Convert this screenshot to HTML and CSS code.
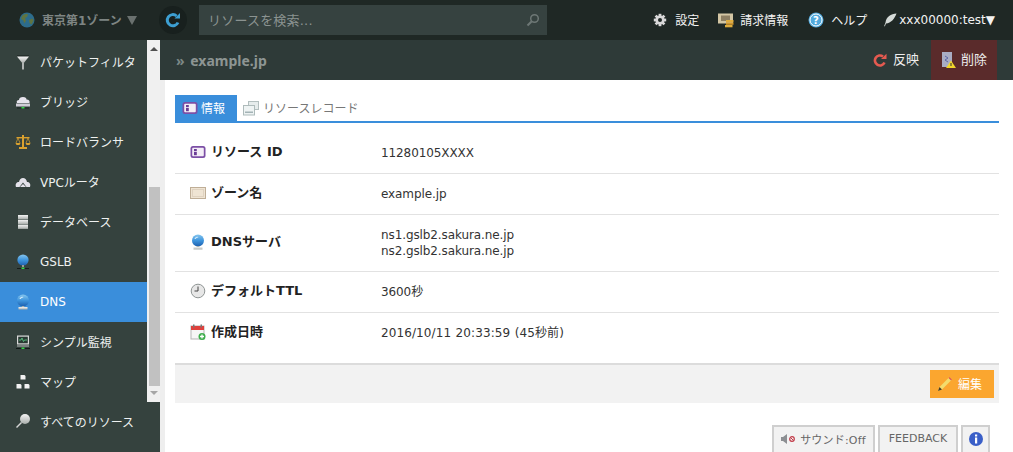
FILE: index.html
```html
<!DOCTYPE html>
<html lang="ja">
<head>
<meta charset="utf-8">
<title>example.jp</title>
<link rel="stylesheet" href="styles.css">
</head>
<body>
<svg class="defs" width="0" height="0">
  <defs>
    <linearGradient id="gGlobe" x1="0" y1="0" x2="0" y2="1"><stop offset="0" stop-color="#86c6ee"/><stop offset=".5" stop-color="#3f95dd"/><stop offset="1" stop-color="#1c5fae"/></linearGradient>
    <linearGradient id="gSteel" x1="0" y1="0" x2="0" y2="1"><stop offset="0" stop-color="#f4f4f4"/><stop offset="1" stop-color="#a9aeab"/></linearGradient>
    <symbol id="info" viewBox="0 0 16 16"><rect x=".5" y="2" width="15" height="12" rx="2.500" fill="#7c4fa6"/><rect x="2.200" y="3.700" width="11.600" height="8.600" rx="1" fill="#f4eef7"/><rect x="4" y="5" width="2.800" height="2" fill="#6b3d96"/><rect x="4" y="7.800" width="2.800" height="3.400" fill="#6b3d96"/></symbol>
    <symbol id="server" viewBox="0 0 16 16"><circle cx="8" cy="6.500" r="6" fill="url(#gGlobe)"/><path d="M4.500 4.500c1-1.600 2.600-2 4-1.600-.5 1-2 .7-2.500 1.600-.4.8-1 .6-1.500 0z" fill="#d5ecfa"/><rect x="6.700" y="12" width="2.600" height="1.400" fill="#aab0ae"/><rect x="3.500" y="13" width="9" height="2.500" fill="url(#gSteel)"/></symbol>
  </defs>
</svg>
<header class="topbar">
  <div class="zone">
    <svg class="ico16" viewBox="0 0 16 16"><circle cx="8" cy="8" r="7.500" fill="#2d6c8c"/><path d="M3 4c2-2 5-2.500 6-1.500L8 5 6 6l1 2.500-1.500 3L4 8 2 7zM10 8l3.500-1.500 1 2-2 4-2-1.500z" fill="#5f7442"/></svg>
    <span class="zone-name lift">東京第1ゾーン</span>
    <span class="zone-arrow"></span>
  </div>
  <div class="reload">
    <svg width="18" height="18" viewBox="0 0 18 18"><path d="M14 11.500A5.600 5.600 0 1 1 12.600 5" fill="none" stroke="#3d9fd2" stroke-width="3"/><path d="M10.500 7.500h5.500V2z" fill="#3d9fd2"/></svg>
  </div>
  <div class="search">
    <span class="search-text lift">リソースを検索...</span>
    <svg width="14" height="14" viewBox="0 0 14 14"><circle cx="8.500" cy="5.500" r="3.800" fill="none" stroke="#6d7775" stroke-width="1.500"/><path d="M5.800 8.200L1.500 12.500" stroke="#6d7775" stroke-width="2"/></svg>
  </div>
  <nav class="topnav">
    <a class="topnav-item gap-set">
      <svg class="ico14" viewBox="0 0 14 14"><g fill="#d8d8d8"><circle cx="7" cy="7" r="4.600"/><rect x="5.600" y=".8" width="2.800" height="12.400"/><rect x="5.600" y=".8" width="2.800" height="12.400" transform="rotate(45 7 7)"/><rect x="5.600" y=".8" width="2.800" height="12.400" transform="rotate(90 7 7)"/><rect x="5.600" y=".8" width="2.800" height="12.400" transform="rotate(135 7 7)"/></g><circle cx="7" cy="7" r="2" fill="#1f2825"/></svg>
      <span class="lift">設定</span>
    </a>
    <a class="topnav-item gap-bill">
      <svg class="ico16" viewBox="0 0 16 16"><rect x="0" y="1.500" width="15" height="10" fill="#d3c6a4"/><rect x="3" y="3.500" width="9" height="5.500" fill="#8d7f63"/><rect x="8" y="8" width="7.500" height="2.300" fill="#e0ad3d"/><rect x="8" y="10.500" width="7.500" height="2.300" fill="#cf962c"/><rect x="7" y="13" width="7.500" height="2.300" fill="#e0ad3d"/></svg>
      <span class="lift">請求情報</span>
    </a>
    <a class="topnav-item gap-help">
      <svg class="ico16" viewBox="0 0 16 16"><circle cx="8" cy="8" r="7.500" fill="#52a9dc"/><circle cx="8" cy="8" r="6" fill="none" stroke="#fff" stroke-width="1"/><text class="help-mark" x="8" y="12" text-anchor="middle">?</text></svg>
      <span class="lift">ヘルプ</span>
    </a>
    <a class="topnav-item gap-user">
      <svg class="ico14" viewBox="0 0 14 14"><path d="M13.500.500C8 1 3 3.500 2.500 9.500L1 13.500l1-.5 1-2.500c5-.5 8.500-4.500 10.500-10z" fill="#d5dbd8"/></svg>
      <span class="user">xxx00000:test▼</span>
    </a>
  </nav>
</header>
<div class="body">
  <aside class="sidebar">
    <div class="side-scroll">
      <ul class="side-list">
        <li class="side-item">
          <svg class="ico16" viewBox="0 0 16 16"><rect x="2" y="1.500" width="12" height="1" fill="#161c1b"/><path d="M2 2.500h12L8.800 9H7.200z" fill="url(#gSteel)"/><rect x="7.300" y="9" width="1.400" height="6.500" fill="#e6e6e6"/></svg>
          <span class="lift">パケットフィルタ</span>
        </li>
        <li class="side-item">
          <svg class="ico16" viewBox="0 0 16 16"><path d="M2 9c-1-2 .5-3 2-3 0-2 1.500-3 4-3s3.500 1 3.500 2.500C14 5.500 15 7 14.500 9z" fill="#e6e3ec"/><rect x="1" y="9.500" width="14" height="3" fill="#cfccd6"/><rect x="2" y="13.500" width="12" height="1" fill="#1a2220"/><rect x="6.500" y="13" width="3" height="1.500" fill="#38d64a"/></svg>
          <span class="lift">ブリッジ</span>
        </li>
        <li class="side-item">
          <svg class="ico16" viewBox="0 0 16 16"><g fill="#d9a12f"><rect x="7" y="1" width="2" height="12"/><rect x="1.500" y="3" width="13" height="1.400"/><rect x="4" y="13" width="8" height="2"/><path d="M.500 9h5L4.500 11h-3zM10.500 9h5L14.500 11h-3z"/></g><path d="M3 4L1 9M3 4l2 5M13 4l-2 5M13 4l2 5" stroke="#d9a12f" stroke-width=".7" fill="none"/></svg>
          <span class="lift">ロードバランサ</span>
        </li>
        <li class="side-item">
          <svg class="ico16" viewBox="0 0 16 16"><path d="M1 13c-1-3 .5-5 3-5 .5-2.500 2-4 4-4s3.500 1.500 4 4c2.500 0 4 2 3 5h-3.500L8 8.500 4.500 13z" fill="#e4e2ea"/><path d="M8 10l3 3H5z" fill="#e4e2ea"/></svg>
          <span class="lift">VPCルータ</span>
        </li>
        <li class="side-item">
          <svg class="ico16" viewBox="0 0 16 16"><rect x="3" y="1" width="10" height="4.300" fill="url(#gSteel)"/><rect x="3" y="5.800" width="10" height="4.300" fill="url(#gSteel)"/><rect x="3" y="10.600" width="10" height="4.300" fill="url(#gSteel)"/></svg>
          <span class="lift">データベース</span>
        </li>
        <li class="side-item">
          <svg class="ico16" viewBox="0 0 16 16"><circle cx="8" cy="6" r="5.600" fill="url(#gGlobe)"/><rect x="7" y="11" width="2" height="2" fill="#999"/><rect x="2" y="14" width="12" height="1" fill="#161c1b"/><rect x="6.500" y="13.500" width="3" height="1.500" fill="#38d64a"/></svg>
          <span>GSLB</span>
        </li>
        <li class="side-item is-active">
          <svg class="ico16"><use href="#server"/></svg>
          <span>DNS</span>
        </li>
        <li class="side-item">
          <svg class="ico16" viewBox="0 0 16 16"><rect x="2" y="1.500" width="12" height="9" fill="#d9d9d9"/><rect x="3.200" y="2.700" width="9.600" height="6.600" fill="#2a3a34"/><path d="M4 6h2l1-2 1.500 3.500L9.500 6H12" stroke="#5fd28a" stroke-width=".8" fill="none"/><rect x="2" y="11.500" width="12" height="1" fill="#bbb"/><rect x="1" y="14" width="14" height="1" fill="#141a19"/><rect x="6.500" y="13.500" width="3" height="1.500" fill="#38d64a"/></svg>
          <span class="lift">シンプル監視</span>
        </li>
        <li class="side-item">
          <svg class="ico16" viewBox="0 0 16 16"><g fill="#f2f2f2"><path d="M5.500 1h4l1 1v3.500h-5z"/><path d="M1.500 10h4l1 1v3.500h-5z"/><path d="M9.500 10h4l1 1v3.500h-5z"/></g></svg>
          <span class="lift">マップ</span>
        </li>
      </ul>
      <div class="side-bar">
        <span class="arrow-up"></span>
        <span class="thumb"></span>
        <span class="arrow-down"></span>
      </div>
    </div>
    <div class="side-item side-all">
      <svg class="ico16" viewBox="0 0 16 16"><circle cx="10" cy="6" r="5" fill="url(#gSteel)"/><path d="M6.500 9.500L1.500 14.500" stroke="#d5d5d5" stroke-width="1.500"/></svg>
      <span>すべてのリソース</span>
    </div>
  </aside>
  <main class="main">
    <div class="titlebar">
      <h1 class="title"><span class="title-mark">»</span> example.jp</h1>
      <div class="actions">
        <a class="action">
          <svg width="14" height="14" viewBox="0 0 14 14"><path d="M11.500 9.500A5 5 0 1 1 10 3.500" fill="none" stroke="#e55a50" stroke-width="2.600"/><path d="M8 6h5.500V.800z" fill="#e55a50"/></svg>
          <span class="lift2">反映</span>
        </a>
        <a class="action action-delete">
          <svg width="16" height="18" viewBox="0 0 16 18"><rect x="1" y="1" width="10" height="15" fill="#a9adc4"/><path d="M4 5l3 2-3 2 3 2" stroke="#5a66a8" fill="none"/><path d="M10 9.500l5 7.500H5z" fill="#f0d52c"/><rect x="9.500" y="12" width="1" height="3" fill="#333"/></svg>
          <span class="lift2">削除</span>
        </a>
      </div>
    </div>
    <div class="content">
      <div class="tabs">
        <a class="tab tab-on"><svg class="ico16"><use href="#info"/></svg><span class="lift">情報</span></a>
        <a class="tab tab-off">
          <svg class="ico16" viewBox="0 0 16 16"><rect x="5.500" y="1.500" width="10" height="8" fill="#e6ecec" stroke="#b3bfbf"/><rect x=".5" y="5.500" width="11" height="9.500" fill="#eef3f3" stroke="#aebbbb"/><rect x="2" y="11.500" width="8" height="1.500" fill="#a3b3b6"/></svg>
          <span class="lift">リソースレコード</span>
        </a>
      </div>
      <dl class="details">
        <div class="row">
          <dt><svg class="ico16"><use href="#info"/></svg><span class="lift2">リソース ID</span></dt>
          <dd>11280105XXXX</dd>
        </div>
        <div class="row">
          <dt><svg class="ico16" viewBox="0 0 16 16"><rect x=".5" y="2.500" width="15" height="11" fill="#efe4d3" stroke="#bfae97"/><rect x="2.500" y="4.500" width="11" height="7" fill="none" stroke="#cfc1ac" stroke-dasharray="1 1"/></svg><span class="lift2">ゾーン名</span></dt>
          <dd>example.jp</dd>
        </div>
        <div class="row">
          <dt><svg class="ico16"><use href="#server"/></svg><span class="lift2">DNSサーバ</span></dt>
          <dd>ns1.gslb2.sakura.ne.jp<br>ns2.gslb2.sakura.ne.jp</dd>
        </div>
        <div class="row">
          <dt><svg class="ico16" viewBox="0 0 16 16"><circle cx="8" cy="8" r="6.800" fill="#e7e7e7" stroke="#8f9594"/><path d="M8 3.500V8H4.500" fill="none" stroke="#444" stroke-width="1"/></svg><span class="lift2">デフォルトTTL</span></dt>
          <dd>3600秒</dd>
        </div>
        <div class="row">
          <dt><svg class="ico16" viewBox="0 0 16 16"><rect x="1" y="2" width="13" height="13" fill="#f6f6f6" stroke="#b5b5b5"/><rect x="1" y="2" width="13" height="4" fill="#e0403c"/><rect x="3" y=".5" width="1.500" height="3" fill="#777"/><rect x="10.500" y=".5" width="1.500" height="3" fill="#777"/><circle cx="12" cy="12.500" r="3.500" fill="#3eae4c"/><path d="M12 10.500v4M10 12.500h4" stroke="#fff" stroke-width="1.300"/></svg><span class="lift2">作成日時</span></dt>
          <dd class="date">2016/10/11 20:33:59 (45秒前)</dd>
        </div>
      </dl>
      <div class="footer-bar">
        <a class="edit">
          <svg class="ico16" viewBox="0 0 16 16"><path d="M1 15l1.500-4L12.500 1l2.500 2.500L5 13.500z" fill="#f3dc6d"/><path d="M12.500 1L15 3.500l-1 1L11.500 2z" fill="#e0564f"/><path d="M1 15l1.500-4L5 13.500z" fill="#4b3d26"/></svg>
          <span class="lift">編集</span>
        </a>
      </div>
      <div class="util">
        <a class="util-btn util-sound">
          <svg width="14" height="12" viewBox="0 0 14 12"><path d="M0 4h2l4-3v10L2 8H0z" fill="#8c8f93"/><circle cx="11" cy="6" r="2.300" fill="none" stroke="#c23a48" stroke-width="1.200"/><path d="M9.500 4.500l3 3" stroke="#c23a48"/></svg>
          <span>サウンド:Off</span>
        </a>
        <a class="util-btn util-feedback">FEEDBACK</a>
        <a class="util-btn util-info">
          <svg class="ico16" viewBox="0 0 16 16"><circle cx="8" cy="8" r="7" fill="#3a5fc8"/><rect x="7" y="3.500" width="2.200" height="2" fill="#fff"/><rect x="7" y="6.500" width="2.200" height="6" fill="#fff"/></svg>
        </a>
      </div>
    </div>
  </main>
</div>
</body>
</html>
```

FILE: styles.css
```css
* { box-sizing: border-box; }
html, body { margin: 0; height: 100%; overflow: hidden; }
body {
  font-family: "DejaVu Sans", "Noto Sans CJK JP", sans-serif;
  font-size: 12px;
  color: #333;
  background: #fff;
}
.defs { position: absolute; }
a { color: inherit; text-decoration: none; }
svg { display: block; flex: none; }
.ico16 { width: 16px; height: 16px; }
.ico14 { width: 14px; height: 14px; }
.lift { padding-bottom: 2px; }
.lift2 { padding-bottom: 4px; }

.topbar {
  height: 40px;
  display: flex;
  align-items: center;
  background: #1f2825;
}
.zone {
  width: 159px;
  padding-left: 19px;
  display: flex;
  align-items: center;
  gap: 7px;
  color: #7e8583;
  font-weight: 700;
}
.zone-arrow {
  margin-left: -2px;
  border-left: 5px solid transparent;
  border-right: 5px solid transparent;
  border-top: 9px solid #6a716f;
}
.reload {
  width: 28px;
  height: 28px;
  border-radius: 50%;
  background: #18201e;
  display: flex;
  align-items: center;
  justify-content: center;
}
.search {
  margin-left: 12px;
  width: 348px;
  height: 30px;
  padding: 0 7px 0 9px;
  background: #364240;
  display: flex;
  align-items: center;
  justify-content: space-between;
  color: #8b9391;
  font-size: 13px;
  letter-spacing: .2px;
}
.topnav {
  margin-left: auto;
  padding-right: 18px;
  display: flex;
  align-items: center;
  color: #f2f2f2;
}
.topnav-item { display: flex; align-items: center; }
.gap-set { gap: 8px; }
.gap-bill { gap: 6px; margin-left: 19px; }
.gap-help { gap: 7px; margin-left: 20px; }
.gap-user { gap: 2px; margin-left: 16px; }
.help-mark { font-size: 10px; font-weight: 700; fill: #fff; }

.body { display: flex; height: 412px; }
.sidebar {
  width: 160px;
  flex: none;
  display: flex;
  flex-direction: column;
  background: #35423e;
}
.side-scroll { height: 362px; display: flex; overflow: hidden; }
.side-list {
  list-style: none;
  margin: 0;
  padding: 2px 0 0;
  width: 147px;
  flex: none;
}
.side-item {
  height: 40px;
  display: flex;
  align-items: center;
  gap: 9px;
  padding-left: 15px;
  color: #eef1f0;
}
.is-active { background: #3a8edb; color: #fff; }
.side-all { margin-top: 0; height: 50px; padding-bottom: 12px; }
.side-bar {
  width: 13px;
  flex: none;
  background: #f0f0f0;
  display: flex;
  flex-direction: column;
  align-items: center;
}
.arrow-up {
  margin-top: 7px;
  border-left: 4px solid transparent;
  border-right: 4px solid transparent;
  border-bottom: 4px solid #505050;
}
.thumb {
  width: 11px;
  height: 199px;
  margin: 136px 0 0 2px;
  background: #c1c1c1;
}
.arrow-down {
  margin-top: 5px;
  border-left: 4px solid transparent;
  border-right: 4px solid transparent;
  border-top: 4px solid #a6a6a6;
}

.main { flex: 1; min-width: 0; display: flex; flex-direction: column; }
.titlebar {
  height: 40px;
  flex: none;
  display: flex;
  align-items: center;
  justify-content: space-between;
  padding: 0 16px 0 16px;
  background: #2e3a38;
}
.title {
  margin: 0;
  font-family: "Noto Sans", "DejaVu Sans", sans-serif;
  font-size: 14px;
  font-weight: 700;
  word-spacing: 2px;
  color: #8d9593;
}
.title-mark { color: #7c8886; }
.actions { display: flex; align-items: stretch; height: 40px; gap: 12px; }
.action {
  display: flex;
  align-items: center;
  gap: 6px;
  color: #eee;
  font-size: 13px;
}
.action-delete {
  width: 66px;
  padding-left: 10px;
  gap: 4px;
  background: #5a2b2b;
}
.content {
  flex: 1;
  margin-left: 5px;
  padding: 15px 14px 0 10px;
  background: #fff;
  box-shadow: -5px 0 0 #eeeeee;
}
.tabs {
  height: 28px;
  display: flex;
  border-bottom: 2px solid #3a8edb;
}
.tab { display: flex; align-items: center; height: 26px; }
.tab-on {
  width: 62px;
  padding-left: 7px;
  gap: 3px;
  background: #3a8edb;
  color: #fff;
}
.tab-off { margin-left: 6px; gap: 4px; color: #777; }
.details { margin: 10px 0 0; }
.row {
  display: flex;
  align-items: center;
  min-height: 41px;
  padding: 0 0 0 15px;
  border-bottom: 1px solid #e2e2e2;
}
.row:nth-child(3) { min-height: 57px; }
.row:last-child { border-bottom: 0; min-height: 50px; padding-bottom: 10px; }
.row dt {
  width: 191px;
  flex: none;
  display: flex;
  align-items: center;
  gap: 5px;
  padding-bottom: 2px;
  font-size: 13px;
  font-weight: 700;
  color: #222;
}
.row dd {
  margin: 0;
  line-height: 16px;
  letter-spacing: -.1px;
  color: #333;
}
.row dd.date { letter-spacing: .1px; word-spacing: .5px; }
.footer-bar {
  height: 40px;
  padding: 5px 5px 0 0;
  border-top: 2px solid #dcdcdc;
  background: #f2f2f2;
  display: flex;
  justify-content: flex-end;
  align-items: flex-start;
}
.edit {
  width: 64px;
  height: 28px;
  display: flex;
  align-items: center;
  gap: 5px;
  padding-left: 7px;
  background: #fba62f;
  color: #fff;
}
.util {
  margin-top: 22px;
  padding-right: 9px;
  display: flex;
  justify-content: flex-end;
  gap: 3px;
}
.util-btn {
  height: 30px;
  display: flex;
  align-items: center;
  justify-content: center;
  background: #f2f2f2;
  border: 2px solid #cfcfcf;
  color: #666;
  font-size: 11px;
  padding-bottom: 3px;
}
.util-sound { width: 103px; gap: 5px; }
.util-sound span { letter-spacing: .2px; }
.util-feedback { width: 80px; }
.util-info { width: 29px; }
```
